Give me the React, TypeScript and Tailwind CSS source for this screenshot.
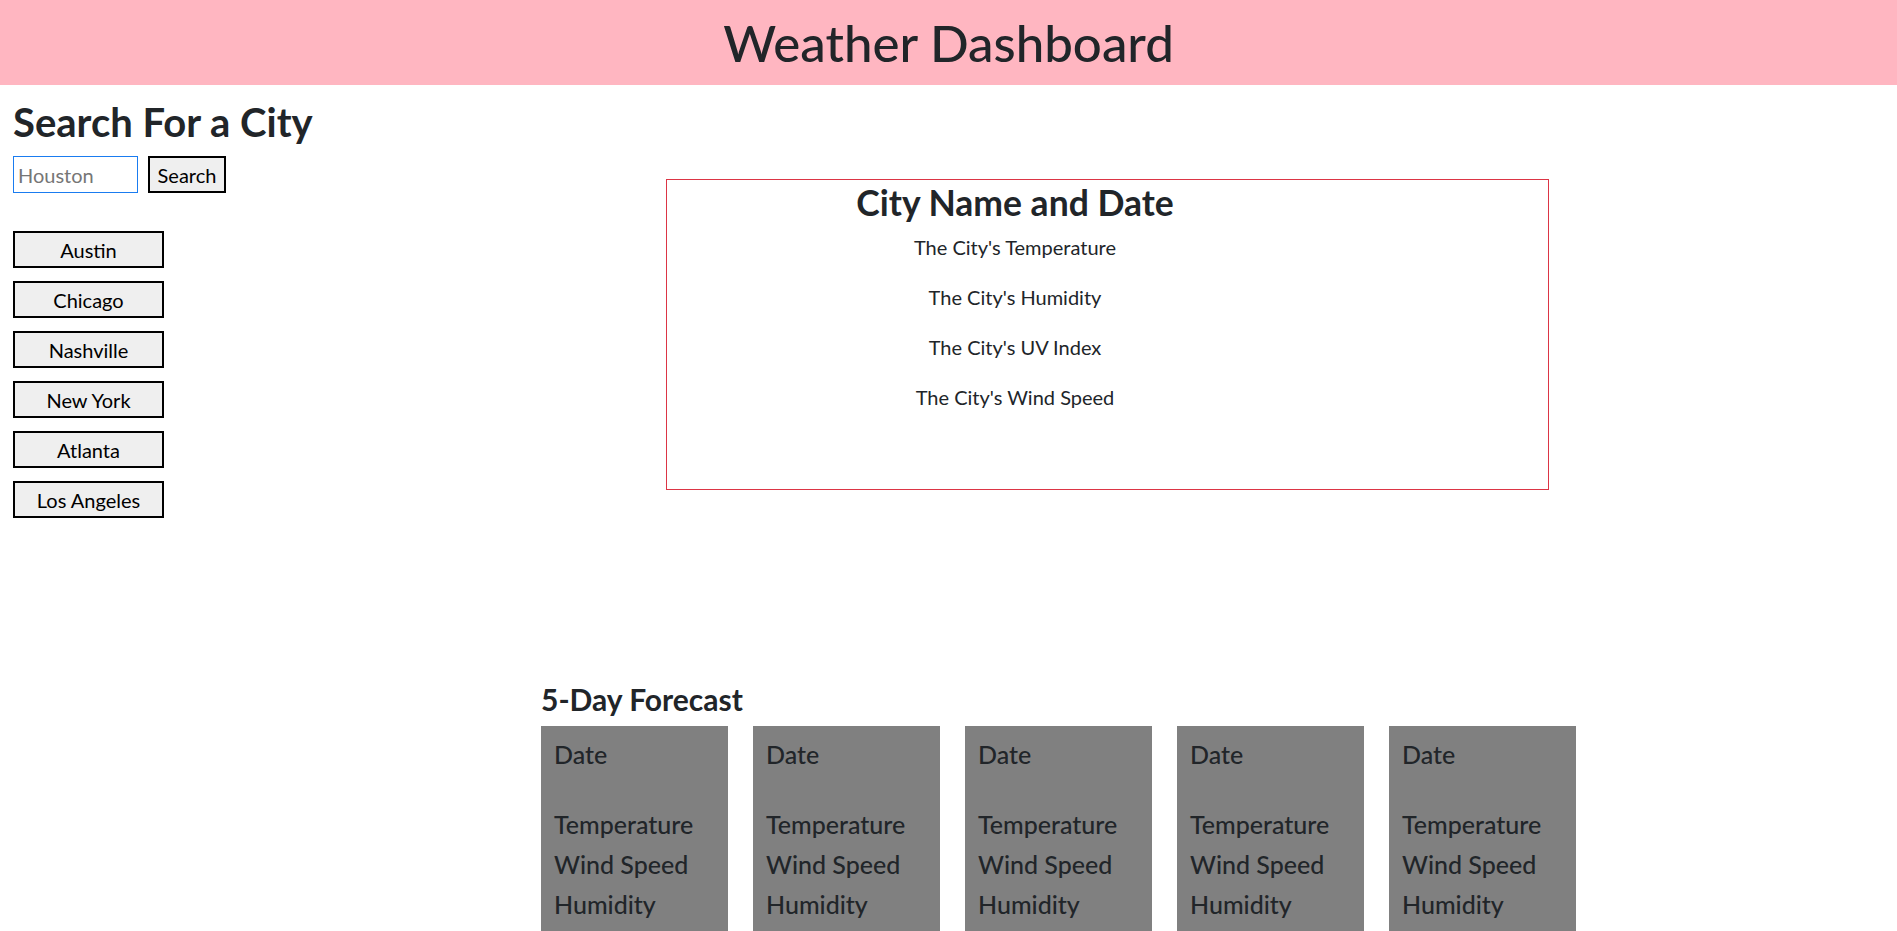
const cities = ['Austin', 'Chicago', 'Nashville', 'New York', 'Atlanta', 'Los Angeles'];
const currentLines = [
  "The City's Temperature",
  "The City's Humidity",
  "The City's UV Index",
  "The City's Wind Speed",
];
const days = [1, 2, 3, 4, 5];

export default function App() {
  return (
    <div className="min-h-screen bg-white font-[Lato,sans-serif] text-[#212529]">
      <header className="flex h-[85px] items-center justify-center bg-[#ffb6c1]">
        <h1 className="text-[51px] font-medium leading-[1.2]">Weather Dashboard</h1>
      </header>

      <div className="flex">
        <aside className="w-[666px] shrink-0 pl-[13px]">
          <h2 className="mt-[14px] text-[40px] font-bold leading-[46px]">Search For a City</h2>

          <div className="mt-[11px] flex items-center gap-[10px]">
            <input
              type="text"
              placeholder="Houston"
              className="h-[37px] w-[125px] border border-[#1a7cf0] px-[4px] text-[20px] text-[#212529] outline-none placeholder:text-[#767676]"
            />
            <button
              type="button"
              className="h-[37px] w-[78px] border-2 border-black bg-[#efefef] text-[20px] text-black"
            >
              Search
            </button>
          </div>

          <div className="mt-[38px] flex flex-col gap-[13px]">
            {cities.map((city) => (
              <button
                key={city}
                type="button"
                className="h-[37px] w-[151px] border-2 border-black bg-[#efefef] text-[20px] text-black"
              >
                {city}
              </button>
            ))}
          </div>
        </aside>

        <section className="pt-[94px]">
          <div className="h-[311px] w-[883px] border border-[#dc3545]">
            <div className="w-[696px] text-center">
              <h2 className="mt-[3px] text-[35.5px] font-bold leading-[40px]">City Name and Date</h2>
              <div className="mt-[9px] flex flex-col gap-[20px]">
                {currentLines.map((line) => (
                  <p key={line} className="text-[20px] leading-[30px]">
                    {line}
                  </p>
                ))}
              </div>
            </div>
          </div>
        </section>
      </div>

      <div className="mt-[164px] pl-[541px]">
        <h3 className="text-[30px] font-bold leading-[34px]">5-Day Forecast</h3>
        <div className="mt-[10px] flex gap-[25px]">
          {days.map((day) => (
            <div key={day} className="w-[187px] bg-[#808080] px-[13px] pt-[8px] pb-[16px]">
              <p className="text-[25px] font-medium leading-[40px]">Date</p>
              <div className="mt-[30px] text-[25px] font-medium leading-[40px]">
                <p>Temperature</p>
                <p>Wind Speed</p>
                <p>Humidity</p>
              </div>
            </div>
          ))}
        </div>
      </div>
    </div>
  );
}
